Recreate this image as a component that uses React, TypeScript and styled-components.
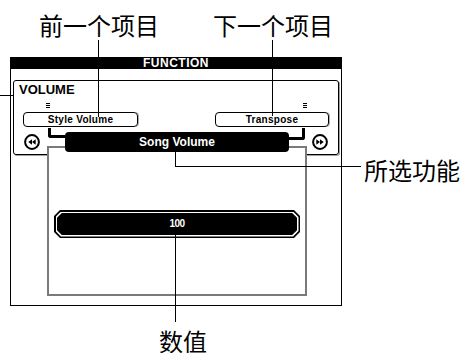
import styled, { createGlobalStyle } from 'styled-components';

const GlobalStyle = createGlobalStyle`
  *, *::before, *::after {
    box-sizing: border-box;
  }
  html, body {
    margin: 0;
    background: #fff;
  }
  body {
    font-family: "Liberation Sans", Arial, sans-serif;
    color: #000;
  }
`;

const Figure = styled.div`
  position: relative;
  width: 461px;
  height: 353px;
  padding: 57px 0 0 10px;
  overflow: hidden;
  background: #fff;
`;

const Screen = styled.div`
  width: 332px;
  display: flex;
  flex-direction: column;
`;

const ScreenTitle = styled.div`
  height: 12px;
  background: #000;
  color: #fff;
  font: bold 12px/12px "Liberation Sans", Arial, sans-serif;
  letter-spacing: 0.5px;
  text-align: center;
`;

const ScreenBody = styled.div`
  height: 237px;
  border: 1px solid #000;
  border-top: 0;
  padding: 11px 2px 0;
  display: flex;
  flex-direction: column;
`;

const Panel = styled.div`
  height: 75px;
  border: 1px solid #000;
  border-radius: 3px;
  box-shadow: 1px 1px 0 #a0a0a0;
  padding-top: 2px;
  display: flex;
  flex-direction: column;
`;

const PanelTitle = styled.div`
  padding-left: 5px;
  font: bold 13px/13px "Liberation Sans", Arial, sans-serif;
`;

const ButtonRow = styled.div`
  display: flex;
  justify-content: space-between;
  padding: 0 9px;
  margin-top: 7px;
`;

const Slot = styled.div<{ $side: 'left' | 'right' }>`
  display: flex;
  flex-direction: column;
  align-items: ${({ $side }) => ($side === 'left' ? 'flex-start' : 'flex-end')};
`;

const Marker = styled.span<{ $side: 'left' | 'right' }>`
  width: 4px;
  height: 5px;
  margin: ${({ $side }) => ($side === 'left' ? '0 0 4px 23px' : '0 22px 4px 0')};
  background: repeating-linear-gradient(to bottom, #000 0 1px, transparent 1px 2px);
`;

const ParamButton = styled.div<{ $width: number }>`
  width: ${({ $width }) => $width}px;
  height: 15px;
  border: 1px solid #000;
  border-radius: 4px;
  box-shadow: 1px 0 0 #b0b0b0;
  font: bold 10px/13px "Liberation Sans", Arial, sans-serif;
  letter-spacing: 0.3px;
  text-align: center;
`;

const NavRow = styled.div`
  display: flex;
  align-items: flex-start;
  padding: 1px 10px 0;
`;

const RoundButton = styled.svg`
  width: 16px;
  height: 16px;
  margin-top: 6px;
  flex-shrink: 0;
`;

const Connector = styled.span<{ $side: 'left' | 'right' }>`
  flex-shrink: 0;
  border-bottom: 3px solid #000;
  ${({ $side }) =>
    $side === 'left'
      ? `
    width: 17px;
    height: 10px;
    margin-left: 8px;
    border-left: 3px solid #000;
    border-bottom-left-radius: 3px;
  `
      : `
    width: 16px;
    height: 12px;
    margin-right: 7px;
    border-right: 3px solid #000;
    border-bottom-right-radius: 3px;
  `}
`;

const Spacer = styled.div`
  flex: 1;
`;

const Stage = styled.div`
  position: relative;
  margin: -9px 0 0 34px;
  width: 260px;
  height: 150px;
  border: 2px solid #7a7a7a;
  background: #fff;
  display: flex;
  flex-direction: column;
  align-items: center;
`;

const SongBar = styled.div`
  margin-top: -16px;
  width: 224px;
  height: 20px;
  border-radius: 4px;
  background: #000;
  color: #fff;
  font: bold 12px/20px "Liberation Sans", Arial, sans-serif;
  text-align: center;
`;

const octagon = (c: number) =>
  `polygon(${c}px 0, calc(100% - ${c}px) 0, 100% ${c}px, 100% calc(100% - ${c}px), calc(100% - ${c}px) 100%, ${c}px 100%, 0 calc(100% - ${c}px), 0 ${c}px)`;

const ValueFrame = styled.div`
  margin-top: 58px;
  width: 246px;
  height: 28px;
  padding: 1.5px;
  background: #000;
  clip-path: ${octagon(6)};
`;

const ValueGap = styled.div`
  height: 100%;
  padding: 1.5px;
  background: #fff;
  clip-path: ${octagon(5.4)};
`;

const ValueFill = styled.div`
  height: 100%;
  background: #000;
  clip-path: ${octagon(4.8)};
  color: #fff;
  font: bold 10px/21px "Liberation Sans", Arial, sans-serif;
  letter-spacing: -0.6px;
  text-align: center;
`;

const Note = styled.span<{ $x: number; $y: number }>`
  position: absolute;
  left: ${({ $x }) => $x}px;
  top: ${({ $y }) => $y}px;
  font: 24px/20px "Noto Sans CJK SC", "Noto Sans", sans-serif;
  white-space: nowrap;
`;

const Leader = styled.span<{ $x: number; $y: number; $w: number; $h: number }>`
  position: absolute;
  left: ${({ $x }) => $x}px;
  top: ${({ $y }) => $y}px;
  width: ${({ $w }) => $w}px;
  height: ${({ $h }) => $h}px;
  background: #000;
`;

function SkipIcon({ dir }: { dir: 'back' | 'forward' }) {
  const tri =
    dir === 'back'
      ? ['4.3,8 8,5.3 8,10.7', '8,8 11.7,5.3 11.7,10.7']
      : ['4.3,5.3 8,8 4.3,10.7', '8,5.3 11.7,8 8,10.7'];
  return (
    <RoundButton viewBox="0 0 16 16">
      <circle cx="8" cy="8" r="6.9" fill="#fff" stroke="#000" strokeWidth="2" />
      {tri.map((p) => (
        <polygon key={p} points={p} fill="#000" />
      ))}
    </RoundButton>
  );
}

export default function App() {
  return (
    <Figure>
      <GlobalStyle />
      <Screen>
        <ScreenTitle>FUNCTION</ScreenTitle>
        <ScreenBody>
          <Panel>
            <PanelTitle>VOLUME</PanelTitle>
            <ButtonRow>
              <Slot $side="left">
                <Marker $side="left" />
                <ParamButton $width={115}>Style Volume</ParamButton>
              </Slot>
              <Slot $side="right">
                <Marker $side="right" />
                <ParamButton $width={114}>Transpose</ParamButton>
              </Slot>
            </ButtonRow>
            <NavRow>
              <SkipIcon dir="back" />
              <Connector $side="left" />
              <Spacer />
              <Connector $side="right" />
              <SkipIcon dir="forward" />
            </NavRow>
          </Panel>
          <Stage>
            <SongBar>Song Volume</SongBar>
            <ValueFrame>
              <ValueGap>
                <ValueFill>100</ValueFill>
              </ValueGap>
            </ValueFrame>
          </Stage>
        </ScreenBody>
      </Screen>

      <Note $x={39} $y={15}>前一个项目</Note>
      <Note $x={213} $y={15}>下一个项目</Note>
      <Note $x={364} $y={160}>所选功能</Note>
      <Note $x={159} $y={331}>数值</Note>

      <Leader $x={98} $y={40} $w={1} $h={77} />
      <Leader $x={272} $y={40} $w={1} $h={76} />
      <Leader $x={175} $y={147} $w={1} $h={20} />
      <Leader $x={175} $y={166} $w={186} $h={1} />
      <Leader $x={175} $y={229} $w={1} $h={93} />
      <Leader $x={0} $y={95} $w={14} $h={1} />
    </Figure>
  );
}
